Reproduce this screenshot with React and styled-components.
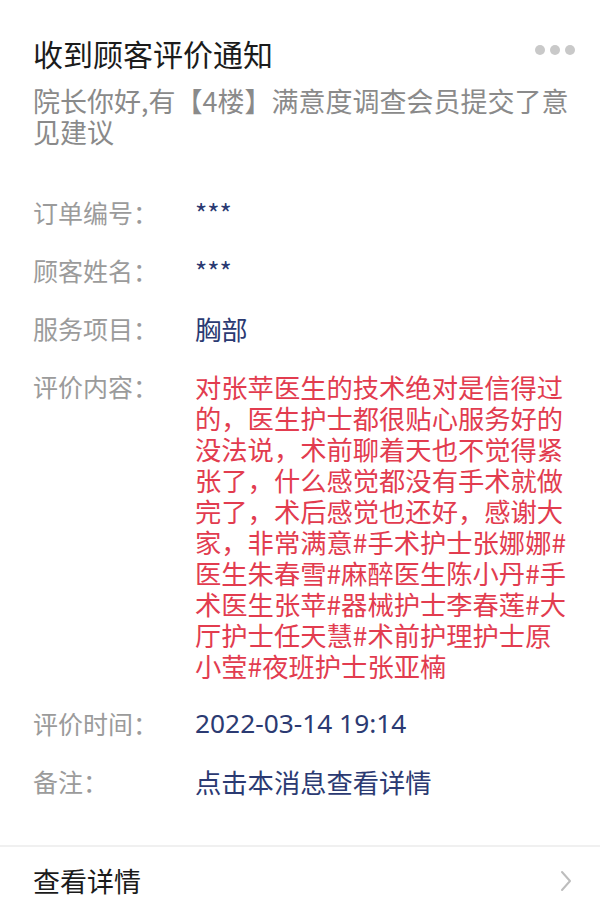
import React from "react";
import styled, { createGlobalStyle } from "styled-components";

const GlobalStyle = createGlobalStyle`
	html, body {
		margin: 0;
		padding: 0;
		background: #ffffff;
	}
	body {
		font-family: "Noto Sans CJK SC", "Noto Sans", sans-serif;
		-webkit-font-smoothing: antialiased;
	}
`;

const Card = styled.div`
	width: 600px;
	min-height: 922px;
	background: #ffffff;
	display: flex;
	flex-direction: column;
`;

const Body = styled.div`
	padding: 33px 25px 0 33px;
`;

const TitleRow = styled.div`
	display: flex;
	align-items: center;
	justify-content: space-between;
`;

const Title = styled.h1`
	margin: 0;
	font-size: 30px;
	line-height: 40px;
	font-weight: 400;
	color: #1b1b1b;
`;

const Dots = styled.div`
	display: flex;
	gap: 5px;
	margin-top: -6px;

	span {
		width: 10px;
		height: 10px;
		border-radius: 50%;
		background: #c9c9c9;
	}
`;

const Subtitle = styled.p`
	margin: 12px 0 0;
	font-size: 27px;
	line-height: 31px;
	color: #8a8a8a;
`;

const Fields = styled.div`
	margin-top: 50px;
	display: flex;
	flex-direction: column;
	gap: 27px;
`;

const Field = styled.div`
	display: grid;
	grid-template-columns: 162px 1fr;
	align-items: start;
`;

const Label = styled.div`
	font-size: 25px;
	line-height: 31px;
	color: #9b9b9b;
`;

const Value = styled.div`
	max-width: 376px;
	font-size: 26.3px;
	line-height: 31px;
	color: ${(p) => (p.$tone === "red" ? "#e23c4f" : "#2b3a72")};
	font-family: ${(p) => (p.$latin ? '"Noto Sans", "Noto Sans CJK SC", sans-serif' : '"Noto Sans CJK SC", sans-serif')};
	word-break: break-all;
`;

const Divider = styled.div`
	height: 2px;
	background: #f0f0f0;
	margin-top: 48px;
`;

const Footer = styled.div`
	display: flex;
	align-items: center;
	justify-content: space-between;
	padding: 6px 28px 0 33px;
	height: 62px;
	box-sizing: border-box;
`;

const FooterText = styled.span`
	font-size: 27px;
	line-height: 40px;
	color: #1b1b1b;
`;

const Chevron = () => (
	<svg width="12" height="22" viewBox="0 0 12 22" fill="none">
		<path d="M2 2 L10 11 L2 20" stroke="#bdbdbd" strokeWidth="2" strokeLinecap="round" strokeLinejoin="round" />
	</svg>
);

const fields = [
	{ label: "订单编号：", value: "***" },
	{ label: "顾客姓名：", value: "***" },
	{ label: "服务项目：", value: "胸部" },
	{
		label: "评价内容：",
		value:
			"对张苹医生的技术绝对是信得过的，医生护士都很贴心服务好的没法说，术前聊着天也不觉得紧张了，什么感觉都没有手术就做完了，术后感觉也还好，感谢大家，非常满意#手术护士张娜娜#医生朱春雪#麻醉医生陈小丹#手术医生张苹#器械护士李春莲#大厅护士任天慧#术前护理护士原小莹#夜班护士张亚楠",
		tone: "red",
	},
	{ label: "评价时间：", value: "2022-03-14 19:14", latin: true },
	{ label: "备注：", value: "点击本消息查看详情" },
];

const App = () => {
	return (
		<>
			<GlobalStyle />
			<Card>
				<Body>
					<TitleRow>
						<Title>收到顾客评价通知</Title>
						<Dots>
							<span />
							<span />
							<span />
						</Dots>
					</TitleRow>
					<Subtitle>院长你好,有【4楼】满意度调查会员提交了意见建议</Subtitle>
					<Fields>
						{fields.map(({ label, value, tone, latin }, i) => (
							<Field key={i}>
								<Label>{label}</Label>
								<Value $tone={tone} $latin={latin}>{value}</Value>
							</Field>
						))}
					</Fields>
				</Body>
				<Divider />
				<Footer>
					<FooterText>查看详情</FooterText>
					<Chevron />
				</Footer>
			</Card>
		</>
	);
};

export default App;
